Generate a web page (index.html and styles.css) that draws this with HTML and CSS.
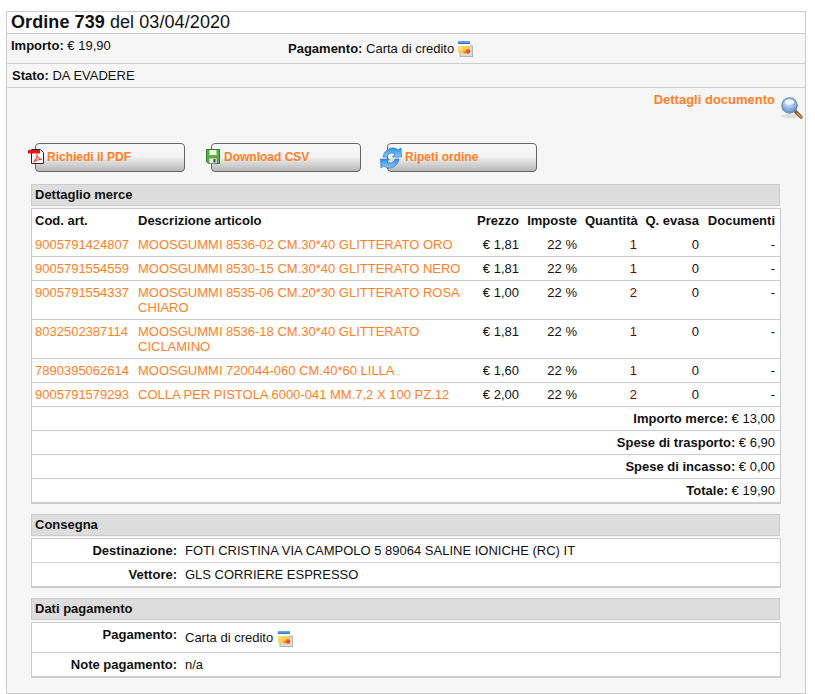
FILE: index.html
```html
<!DOCTYPE html>
<html lang="it">
<head>
<meta charset="utf-8">
<title>Ordine 739</title>
<link rel="stylesheet" href="styles.css">
</head>
<body>
<svg class="defs" width="0" height="0" aria-hidden="true">
  <defs>
    <linearGradient id="cardBlue" x1="0" y1="0" x2="0" y2="1"><stop offset="0" stop-color="#7ab4ea"/><stop offset="1" stop-color="#2f6fc0"/></linearGradient>
    <linearGradient id="cardGold" x1="0" y1="0" x2="1" y2="1"><stop offset="0" stop-color="#ffeb90"/><stop offset="1" stop-color="#f4b93c"/></linearGradient>
    <linearGradient id="arrowBlue" x1="0" y1="0" x2="0" y2="1"><stop offset="0" stop-color="#2f8fe8"/><stop offset="1" stop-color="#8cc8f6"/></linearGradient>
    <symbol id="card" viewBox="0 0 16 16">
      <rect x="3" y="5" width="12.500" height="10.500" fill="#dcdcdc" stroke="#b4b4b4"/>
      <rect x="1" y="0" width="12" height="12" fill="url(#cardGold)"/>
      <rect x="1" y="0" width="12" height="3" fill="url(#cardBlue)"/>
      <rect x="1" y="3" width="12" height="2" fill="#fdfdf4"/>
      <circle cx="11" cy="10.500" r="2.300" fill="#e8541c"/>
      <circle cx="8" cy="11" r="1.600" fill="#f08a22"/>
    </symbol>
  </defs>
</svg>
<main class="order">
  <h1 class="title"><b>Ordine 739</b> del 03/04/2020</h1>
  <div class="summary">
    <div class="amount"><b>Importo:</b> € 19,90</div>
    <div class="payment"><b>Pagamento:</b> Carta di credito <svg class="card" width="16" height="16"><use href="#card"/></svg></div>
  </div>
  <div class="status"><b>Stato:</b> DA EVADERE</div>
  <div class="panel">
    <div class="doc-link">
      <a href="#">Dettagli documento</a>
      <svg class="lens" width="24" height="24" viewBox="0 0 24 24">
        <defs><radialGradient id="glass" cx=".45" cy=".3" r=".8"><stop offset="0" stop-color="#e4effa"/><stop offset=".55" stop-color="#8db6e2"/><stop offset="1" stop-color="#4f7fb8"/></radialGradient></defs>
        <ellipse cx="10" cy="20" rx="9" ry="2" fill="#ddd"/>
        <path d="M15 15 L21 21" stroke="#8a5a28" stroke-width="3.400" stroke-linecap="round"/>
        <path d="M17.500 17.500 L21 21" stroke="#d59a58" stroke-width="1.400" stroke-linecap="round"/>
        <circle cx="9.500" cy="9.500" r="7.600" fill="url(#glass)" stroke="#6f8fae" stroke-width="1.400"/>
        <ellipse cx="9.500" cy="6" rx="4.600" ry="2.600" fill="#f2f7fc" opacity=".8"/>
      </svg>
    </div>
    <div class="actions">
      <a class="btn" href="#">
        <svg class="btn-icon pdf" width="16" height="15" viewBox="0 0 16 15">
          <path d="M3.500 .5H12.500L15.500 3.500V14.500H3.500Z" fill="#fff" stroke="#3a2020"/>
          <path d="M5.500 13C8 10.500 9.500 7 9 4.500C8.500 7 10.500 9.500 14 10.500C11 10 8 11 5.500 13Z" fill="none" stroke="#e0584f" stroke-width="1.100"/>
          <rect x="0" y="1" width="12" height="3.500" fill="#e8141a"/>
        </svg>
        Richiedi il PDF
      </a>
      <a class="btn btn-mid" href="#">
        <svg class="btn-icon floppy" width="14" height="15" viewBox="0 0 14 15">
          <path d="M.5 .5H13.500V14.500H2.500L.5 12.500Z" fill="#58b33c" stroke="#2f7d22"/>
          <rect x="3.500" y="1" width="7" height="5" fill="#eef7e8"/>
          <rect x="3" y="9" width="8" height="5.500" fill="#e8e8e8" stroke="#7a7a7a" stroke-width=".6"/>
          <rect x="7.500" y="10" width="2" height="3.500" fill="#444"/>
        </svg>
        Download CSV
      </a>
      <a class="btn btn-wide" href="#">
        <svg class="btn-icon refresh" width="22" height="22" viewBox="0 0 22 22">
          <path d="M3 10C4 4 9 .5 14 1C15.500 1.200 17 2 18 3L21 1L21.500 10L12.500 10L15 7C12 5 8 6 7 10Z" fill="url(#arrowBlue)" stroke="#2a78cc" stroke-width=".7"/>
          <path d="M19 12C18 18 13 21.500 8 21C6.500 20.800 5 20 4 19L1 21L.5 12L9.500 12L7 15C10 17 14 16 15 12Z" fill="url(#arrowBlue)" stroke="#2a78cc" stroke-width=".7"/>
        </svg>
        Ripeti ordine
      </a>
    </div>

    <h2 class="section-head first">Dettaglio merce</h2>
    <table class="grid items">
      <colgroup>
        <col class="c-code"><col class="c-desc"><col class="c-price"><col class="c-tax"><col class="c-qty"><col class="c-done"><col class="c-docs">
      </colgroup>
      <thead>
        <tr><th>Cod. art.</th><th>Descrizione articolo</th><th class="num">Prezzo</th><th class="num">Imposte</th><th class="num">Quantità</th><th class="num">Q. evasa</th><th class="num">Documenti</th></tr>
      </thead>
      <tbody>
        <tr><td><a href="#">9005791424807</a></td><td><a href="#">MOOSGUMMI 8536-02 CM.30*40 GLITTERATO ORO</a></td><td class="num">€ 1,81</td><td class="num">22 %</td><td class="num red">1</td><td class="num">0</td><td class="num">-</td></tr>
        <tr><td><a href="#">9005791554559</a></td><td><a href="#">MOOSGUMMI 8530-15 CM.30*40 GLITTERATO NERO</a></td><td class="num">€ 1,81</td><td class="num">22 %</td><td class="num red">1</td><td class="num">0</td><td class="num">-</td></tr>
        <tr><td><a href="#">9005791554337</a></td><td><a href="#">MOOSGUMMI 8535-06 CM.20*30 GLITTERATO ROSA CHIARO</a></td><td class="num">€ 1,00</td><td class="num">22 %</td><td class="num red">2</td><td class="num">0</td><td class="num">-</td></tr>
        <tr><td><a href="#">8032502387114</a></td><td><a href="#">MOOSGUMMI 8536-18 CM.30*40 GLITTERATO CICLAMINO</a></td><td class="num">€ 1,81</td><td class="num">22 %</td><td class="num red">1</td><td class="num">0</td><td class="num">-</td></tr>
        <tr><td><a href="#">7890395062614</a></td><td><a href="#">MOOSGUMMI 720044-060 CM.40*60 LILLA</a></td><td class="num">€ 1,60</td><td class="num">22 %</td><td class="num red">1</td><td class="num">0</td><td class="num">-</td></tr>
        <tr><td><a href="#">9005791579293</a></td><td><a href="#">COLLA PER PISTOLA 6000-041 MM.7,2 X 100 PZ.12</a></td><td class="num">€ 2,00</td><td class="num">22 %</td><td class="num red">2</td><td class="num">0</td><td class="num">-</td></tr>
        <tr><td class="num" colspan="7"><b>Importo merce:</b> € 13,00</td></tr>
        <tr><td class="num" colspan="7"><b>Spese di trasporto:</b> € 6,90</td></tr>
        <tr><td class="num" colspan="7"><b>Spese di incasso:</b> € 0,00</td></tr>
        <tr><td class="num" colspan="7"><b>Totale:</b> € 19,90</td></tr>
      </tbody>
    </table>

    <h2 class="section-head">Consegna</h2>
    <table class="grid info">
      <tbody>
        <tr><th>Destinazione:</th><td>FOTI CRISTINA VIA CAMPOLO 5 89064 SALINE IONICHE (RC) IT</td></tr>
        <tr><th>Vettore:</th><td>GLS CORRIERE ESPRESSO</td></tr>
      </tbody>
    </table>

    <h2 class="section-head">Dati pagamento</h2>
    <table class="grid info">
      <tbody>
        <tr class="tall"><th>Pagamento:</th><td>Carta di credito <svg class="card" width="16" height="16"><use href="#card"/></svg></td></tr>
        <tr><th>Note pagamento:</th><td>n/a</td></tr>
      </tbody>
    </table>
  </div>
</main>
</body>
</html>
```
FILE: styles.css
```css
html, body { margin: 0; padding: 0; background: #fff; }
body {
  padding: 11px 9px 0 6px;
  font: 13px/15px "Liberation Sans", Arial, sans-serif;
  color: #111;
}
.defs { position: absolute; }
a { color: #ff7f27; text-decoration: none; }
.order { border: 1px solid #ccc; background: #f6f6f6; }
.title {
  margin: 0;
  height: 21px;
  padding-left: 4px;
  background: #fff;
  border-bottom: 1px solid #ccc;
  font-size: 18px;
  line-height: 21px;
  font-weight: 400;
  letter-spacing: .08px;
}
.summary {
  display: flex;
  height: 29px;
  border-bottom: 1px solid #ccc;
}
.amount { width: 281px; padding: 4px 0 0 4px; box-sizing: border-box; }
.payment { padding-top: 7px; }
.card { vertical-align: -4px; margin-left: -1px; }
.status {
  height: 24px;
  padding: 4px 0 0 5px;
  box-sizing: border-box;
  border-bottom: 1px solid #ccc;
}
.panel { padding: 0 24px 15px; }
.doc-link {
  display: flex;
  justify-content: flex-end;
  margin-right: -23px;
  height: 31px;
  padding-top: 4px;
  box-sizing: border-box;
  font-weight: 700;
}
.doc-link a { margin-right: 5px; }
.lens { margin-top: 4px; }
.actions {
  display: flex;
  gap: 26px;
  margin: 24px 0 12px 4px;
}
.btn {
  position: relative;
  display: block;
  width: 150px;
  height: 29px;
  box-sizing: border-box;
  padding: 6px 0 0 11px;
  border: 1px solid #666;
  border-radius: 4px;
  background: linear-gradient(#f8f8f8 0, #f4f4f4 45%, #b8b8b8 100%);
  font-size: 12px;
  font-weight: 700;
}
.btn-mid { padding-left: 12px; }
.btn-wide { padding-left: 17px; }
.btn-icon { position: absolute; left: -8px; top: 5px; }
.btn-icon.floppy { left: -6px; }
.btn-icon.refresh { top: 3px; }
.section-head {
  margin: 10px 0 2px;
  height: 22px;
  box-sizing: border-box;
  padding: 2px 0 0 3px;
  width: 749px;
  background: #ddd;
  border: 1px solid #ccc;
  font-size: 13px;
  line-height: 16px;
  font-weight: 700;
}
.section-head.first { margin-top: 0; }
.grid {
  width: 750px;
  box-sizing: border-box;
  border-collapse: separate;
  border-spacing: 0;
  table-layout: fixed;
  background: #fff;
  border: 1px solid #ccc;
  border-bottom-width: 2px;
}
.grid th, .grid td {
  padding: 4px 5px 4px 3px;
  border-bottom: 1px solid #ccc;
  vertical-align: top;
  text-align: left;
}
.grid thead th { padding-bottom: 5px; }
.grid tr:last-child th, .grid tr:last-child td { border-bottom: 0; }
.grid .num { text-align: right; }
.red { color: #800000; }
.c-code { width: 103px; }
.c-desc { width: 339px; }
.c-price { width: 50px; }
.c-tax { width: 58px; }
.c-qty { width: 60px; }
.c-done { width: 62px; }
.info th { width: 142px; text-align: right; }
.tall th { padding-bottom: 8px; }
.tall td { padding-top: 7px; padding-bottom: 5px; }
.tall .card { vertical-align: -5px; margin-left: 0; }
```
